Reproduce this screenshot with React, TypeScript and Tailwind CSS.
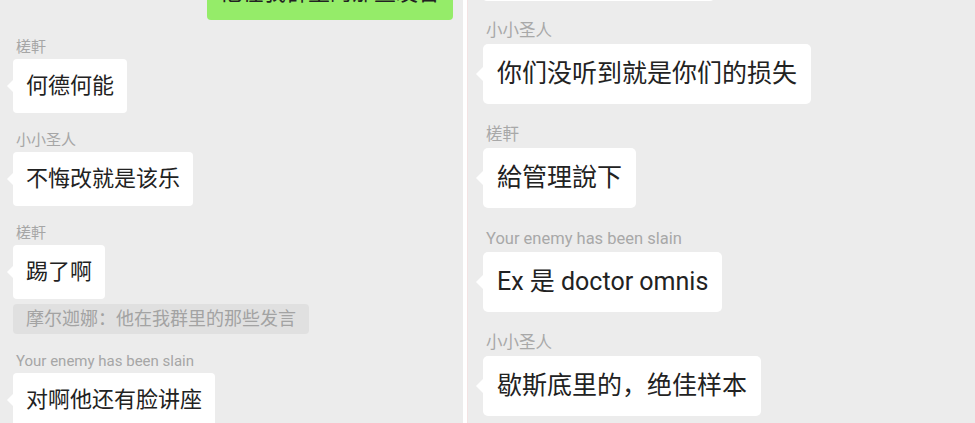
import * as React from "react";

// left screenshot is a bit smaller than the right one, so two size sets
function LeftMsg({ name, text, className = "" }: { name: string; text: string; className?: string }) {
  return (
    <div className={`flex flex-col items-start ${className}`}>
      <div className="ml-[16px] text-[15px] leading-[18px] text-[#a6a6a6]">{name}</div>
      <div className="relative mt-[3px] ml-[13px] rounded-[4px] bg-white px-[13px] py-[12px] text-[22px] leading-[30px] text-[#222]">
        <span className="absolute -left-[6px] top-1/2 h-0 w-0 -translate-y-1/2 border-y-[6px] border-r-[6px] border-y-transparent border-r-white" />
        {text}
      </div>
    </div>
  );
}

function RightMsg({ name, text, className = "" }: { name: string; text: string; className?: string }) {
  return (
    <div className={`flex flex-col items-start ${className}`}>
      <div className="ml-[18px] text-[16.5px] leading-[20px] text-[#a8a8a8]">{name}</div>
      <div className="relative mt-[3px] ml-[15px] rounded-[5px] bg-white px-[14px] py-[13px] text-[25px] leading-[34px] text-[#222]">
        <span className="absolute -left-[7px] top-1/2 h-0 w-0 -translate-y-1/2 border-y-[7px] border-r-[7px] border-y-transparent border-r-white" />
        {text}
      </div>
    </div>
  );
}

export default function App() {
  return (
    <div className="flex h-[423px] w-[975px] overflow-hidden bg-white font-[Roboto,'Noto_Sans_CJK_SC',sans-serif]">
      {/* left shot */}
      <div className="flex h-full w-[463px] shrink-0 flex-col overflow-hidden bg-[#ececec]">
        <div className="-mt-[34px] flex justify-end pr-[10px]">
          <div className="rounded-[4px] bg-[#95ec69] px-[13px] py-[12px] text-[22px] leading-[30px] text-[#222]">
            他在我群里的那些发言
          </div>
        </div>
        <LeftMsg className="mt-[18px]" name="槎軒" text="何德何能" />
        <LeftMsg className="mt-[18px]" name="小小圣人" text="不悔改就是该乐" />
        <LeftMsg className="mt-[18px]" name="槎軒" text="踢了啊" />
        <div className="mt-[5px] ml-[13px] self-start rounded-[4px] bg-[#e0e0e0] px-[13px] text-[18px] leading-[30px] text-[#a3a3a3]">
          摩尔迦娜：他在我群里的那些发言
        </div>
        <LeftMsg className="mt-[18px]" name="Your enemy has been slain" text="对啊他还有脸讲座" />
      </div>

      <div className="w-[4px] shrink-0 bg-white" />

      {/* right shot */}
      <div className="flex h-full flex-1 flex-col overflow-hidden border-l border-[#f3e3e3] bg-[#ececec]">
        <div className="-mt-[59px] ml-[14px] h-[60px] w-[233px] rounded-[5px] bg-white" />
        <RightMsg className="mt-[20px]" name="小小圣人" text="你们没听到就是你们的损失" />
        <RightMsg className="mt-[21px]" name="槎軒" text="給管理說下" />
        <RightMsg className="mt-[21px]" name="Your enemy has been slain" text="Ex 是 doctor omnis" />
        <RightMsg className="mt-[21px]" name="小小圣人" text="歇斯底里的，绝佳样本" />
      </div>
    </div>
  );
}
